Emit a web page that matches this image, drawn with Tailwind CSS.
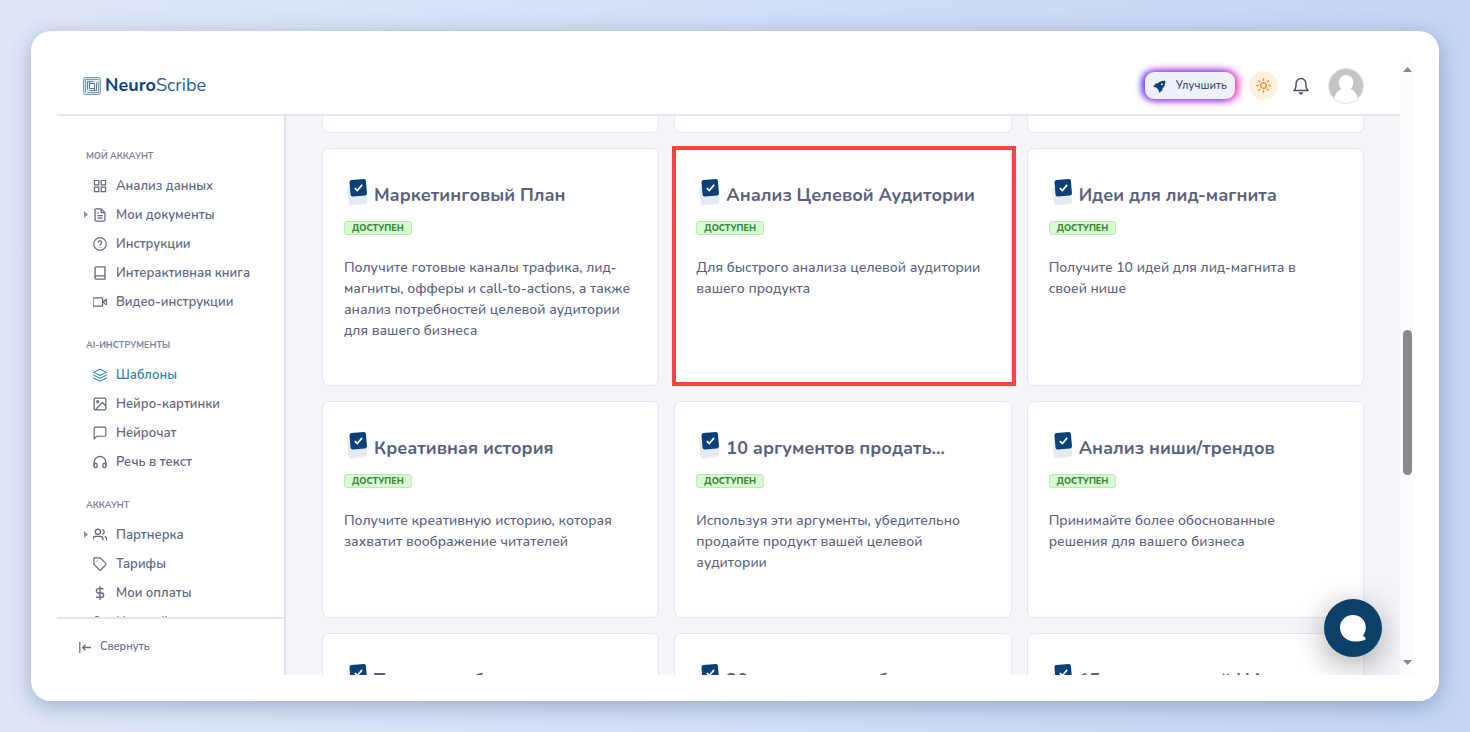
<!DOCTYPE html>
<html lang="ru">
<head>
<meta charset="utf-8">
<meta name="viewport" content="width=device-width, initial-scale=1">
<title>NeuroScribe — Шаблоны</title>
<script src="https://cdn.jsdelivr.net/npm/@tailwindcss/browser@4"></script>
</head>
<body class="h-screen overflow-hidden bg-linear-to-r from-[#e0e7f8] to-[#c6d5f5] p-[31px] font-['Nunito','Open_Sans','Noto_Sans',sans-serif] text-[#5a617d]">

<svg class="hidden" aria-hidden="true">
  <symbol id="doc" viewBox="0 0 22 28">
    <rect x="2" y="8.500" width="18.500" height="18" rx="2.500" fill="#e4eaf2" transform="rotate(-6 11 17)"/>
    <rect x="4" y="1.500" width="16.500" height="16.500" rx="2.200" fill="#0c4079" transform="rotate(-5 12 10)"/>
    <path d="M8.800 10.200l2.600 2.300 4.700-5.600" fill="none" stroke="#fff" stroke-width="1.700"/>
  </symbol>
</svg>

<div class="flex h-full flex-col rounded-[20px] bg-white p-[26px] pr-[25px] shadow-[0_5px_22px_rgba(50,70,110,0.36)]">
  <div class="relative flex min-h-0 flex-1">
    <div class="flex min-w-0 flex-1 flex-col">

      <header class="flex h-[59px] shrink-0 items-center border-b-2 border-[#e2e5ee] pr-9 pl-[26px]">
        <a href="#" class="flex items-center gap-1 text-[18px] text-[#2b5d92]">
          <svg class="size-[18px]" viewBox="0 0 18 18" fill="none" stroke="#7d9db5" stroke-width="1">
            <rect x="0.600" y="0.600" width="16.800" height="16.800" rx="2" fill="#e3ecf2" stroke="#6c8fa9"/>
            <path d="M2.500 15.500V2.500h13M15.500 4.500v11h-11"/>
            <path d="M4.500 12.500V4.500h6M13.500 5.500v8h-7" stroke="#5d86a4"/>
            <rect x="6.500" y="6.500" width="5" height="5" fill="#fff" stroke="none"/>
            <path d="M6.500 4.500v7M11.500 6.500v7M6.500 11.500h5M6.500 6.500h5" stroke="#47749a"/>
          </svg>
          <span><b class="text-[#0f427c]">Neuro</b>Scribe</span>
        </a>
        <div class="ml-auto flex items-center">
          <button class="flex h-[27px] items-center gap-[10px] rounded-[9px] bg-[#eef1f7] px-2 pt-px text-[11px] font-semibold text-[#3b5378] shadow-[-3px_0_7px_#5a4dff,3px_0_8px_#ff4fb8,0_0_9px_#c04df0]">
            <svg class="size-[13px]" viewBox="0 0 24 24" fill="#0c4079"><path fill-rule="evenodd" d="M22.500 1.500C16 1 11.500 3 8.500 6.500H5L.5 12.500l5.500 1.500L10 18l1.500 5.500 6-4.500v-3.500c4-3 5.500-7.500 5-14zM16.500 9.500a1.800 1.800 0 1 1 0-3.600 1.800 1.800 0 0 1 0 3.600z"/></svg>
            Улучшить
          </button>
          <button aria-label="Светлая тема" class="ml-[14px] flex size-[29px] items-center justify-center rounded-full bg-[#fff1de]">
            <svg class="size-[15px]" viewBox="0 0 24 24" fill="none" stroke="#f0963c" stroke-width="2.400" stroke-linecap="round"><circle cx="12" cy="12" r="4.600"/><path d="M12 1.200v2.300M12 20.500v2.300M4.300 4.300l1.600 1.600M18.100 18.100l1.600 1.600M1.200 12h2.300M20.500 12h2.300M4.300 19.700l1.600-1.600M18.100 5.900l1.600-1.600"/></svg>
          </button>
          <button aria-label="Уведомления" class="ml-[14px] flex size-[18px] items-center justify-center">
            <svg class="size-[18px]" viewBox="0 0 24 24" fill="none" stroke="#4a4f69" stroke-width="2" stroke-linejoin="round"><path d="M18.500 8.500a6.500 6.500 0 0 0-13 0c0 5.500-1 8-3 9.500h19c-2-1.500-3-4-3-9.500z"/><path d="M9.500 21h5l-1.200 1.800h-2.600z" fill="#4a4f69" stroke-width="1"/></svg>
          </button>
          <button aria-label="Профиль" class="ml-[18px] size-[36px] overflow-hidden rounded-full border border-[#dfe1ee]">
            <svg class="size-full" viewBox="0 0 36 36"><path fill="#c4c4c4" d="M0 0h36v36H0z"/><ellipse cx="18" cy="14.500" rx="7.800" ry="8.200" fill="#fff"/><path d="M5 36c0-9 4.500-14 9-15h8c4.500 1 9 6 9 15z" fill="#fff"/></svg>
          </button>
        </div>
      </header>

      <div class="flex min-h-0 flex-1">
        <aside class="flex w-[229px] shrink-0 flex-col border-r-2 border-[#dfe1ea]">
          <nav class="min-h-0 flex-1 overflow-hidden pt-8 text-[13px] font-semibold text-[#616884] [&_a>svg]:mb-[3px]">
            <h2 class="mb-2 pl-[29px] text-[9px] leading-4 font-bold text-[#7d849b]">МОЙ АККАУНТ</h2>
            <a href="#" class="flex h-[29px] items-center gap-[9px] pt-px pl-9">
              <svg class="size-[14px]" viewBox="0 0 24 24" fill="none" stroke="currentColor" stroke-width="2"><path d="M2.500 2.500h7.500v7.500H2.500zM14 2.500h7.500v7.500H14zM14 14h7.500v7.500H14zM2.500 14h7.500v7.500H2.500z"/></svg>Анализ данных</a>
            <a href="#" class="flex h-[29px] items-center gap-[9px] pt-px pl-[27px]">
              <svg class="-mr-[4px] h-[7px] w-[4px]" viewBox="0 0 4 7" fill="#8b90ad"><path d="M0 0l4 3.500L0 7z"/></svg>
              <svg class="size-[14px]" viewBox="0 0 24 24" fill="none" stroke="currentColor" stroke-width="2.200" stroke-linejoin="round"><path d="M14 1.500H5.500a2 2 0 0 0-2 2v17a2 2 0 0 0 2 2h13a2 2 0 0 0 2-2V8z"/><path d="M14 1.500V8h6.500M16.500 13h-9M16.500 17.500h-9M10 8.500H7.500"/></svg>Мои документы</a>
            <a href="#" class="flex h-[29px] items-center gap-[9px] pt-px pl-9">
              <svg class="size-[14px]" viewBox="0 0 24 24" fill="none" stroke="currentColor" stroke-width="2" stroke-linecap="round"><circle cx="12" cy="12" r="10.800"/><path d="M9 9a3 3 0 0 1 5.900 1c0 2-2.900 2.500-2.900 4M12 17.500v.1"/></svg>Инструкции</a>
            <a href="#" class="flex h-[29px] items-center gap-[9px] pt-px pl-9">
              <svg class="size-[14px]" viewBox="0 0 24 24" fill="none" stroke="currentColor" stroke-width="2.200" stroke-linejoin="round"><path d="M3.500 19.500A2.500 2.500 0 0 1 6 17h14.500"/><path d="M6 1.500h14.500v21H6a2.500 2.500 0 0 1-2.500-2.500V4A2.500 2.500 0 0 1 6 1.500z"/></svg>Интерактивная книга</a>
            <a href="#" class="flex h-[29px] items-center gap-[9px] pt-px pl-9">
              <svg class="size-[14px]" viewBox="0 0 24 24" fill="none" stroke="currentColor" stroke-width="2.200" stroke-linejoin="round"><path d="M23 7.500l-6 4.500 6 4.500z"/><rect x="0" y="5" width="16.500" height="14" rx="1.500"/></svg>Видео-инструкции</a>

            <h2 class="mt-5 mb-2 pl-[29px] text-[9px] leading-4 font-bold text-[#7d849b]">AI-ИНСТРУМЕНТЫ</h2>
            <a href="#" class="flex h-[29px] items-center gap-[9px] pt-px pl-9 text-[#2d83ae]" aria-current="page">
              <svg class="size-[14px]" viewBox="0 0 24 24" fill="none" stroke="currentColor" stroke-width="1.800" stroke-linejoin="round" stroke-linecap="round"><path d="M12 2L1 7.500 12 13l11-5.500zM1 17l11 5.500L23 17M1 12.200l11 5.500 11-5.500"/></svg>Шаблоны</a>
            <a href="#" class="flex h-[29px] items-center gap-[9px] pt-px pl-9">
              <svg class="size-[14px]" viewBox="0 0 24 24" fill="none" stroke="currentColor" stroke-width="2.200" stroke-linejoin="round"><rect x="2" y="2" width="20" height="20" rx="2"/><circle cx="8" cy="8" r="1.700"/><path d="M22 15.500L16 9.500 4 22"/></svg>Нейро-картинки</a>
            <a href="#" class="flex h-[29px] items-center gap-[9px] pt-px pl-9">
              <svg class="size-[14px]" viewBox="0 0 24 24" fill="none" stroke="currentColor" stroke-width="2" stroke-linejoin="round"><path d="M22 15.500a2 2 0 0 1-2 2H6.500L2 22V4a2 2 0 0 1 2-2h16a2 2 0 0 1 2 2z"/></svg>Нейрочат</a>
            <a href="#" class="flex h-[29px] items-center gap-[9px] pt-px pl-9">
              <svg class="size-[14px]" viewBox="0 0 24 24" fill="none" stroke="currentColor" stroke-width="2.200" stroke-linejoin="round"><path d="M2 19v-6.500a10 10 0 0 1 20 0V19"/><path d="M22 19.500a2 2 0 0 1-2 2h-1a2 2 0 0 1-2-2v-3a2 2 0 0 1 2-2h3zM2 19.500a2 2 0 0 0 2 2h1a2 2 0 0 0 2-2v-3a2 2 0 0 0-2-2H2z"/></svg>Речь в текст</a>

            <h2 class="mt-5 mb-2 pl-[29px] text-[9px] leading-4 font-bold text-[#7d849b]">АККАУНТ</h2>
            <a href="#" class="flex h-[29px] items-center gap-[9px] pt-px pl-[27px]">
              <svg class="-mr-[4px] h-[7px] w-[4px]" viewBox="0 0 4 7" fill="#8b90ad"><path d="M0 0l4 3.500L0 7z"/></svg>
              <svg class="size-[14px]" viewBox="0 0 24 24" fill="none" stroke="currentColor" stroke-width="2.200"><path d="M17 21.500v-2.500a4.500 4.500 0 0 0-4.500-4.500h-8A4.500 4.500 0 0 0 0 19v2.500M23.500 21.500v-2.500a4.500 4.500 0 0 0-3.500-4.300M16 2.200a4.600 4.600 0 0 1 0 8.800"/><circle cx="8.500" cy="6.500" r="4.500"/></svg>Партнерка</a>
            <a href="#" class="flex h-[29px] items-center gap-[9px] pt-px pl-9">
              <svg class="size-[14px]" viewBox="0 0 24 24" fill="none" stroke="currentColor" stroke-width="2" stroke-linejoin="round"><path d="M21.500 14l-7.800 7.800a2 2 0 0 1-2.800 0L1.500 12.500v-11h11l9 9.500a2.200 2.200 0 0 1 0 3z"/><path d="M7 7h.1" stroke-linecap="round"/></svg>Тарифы</a>
            <a href="#" class="flex h-[29px] items-center gap-[9px] pt-px pl-9">
              <svg class="size-[14px]" viewBox="0 0 24 24" fill="none" stroke="currentColor" stroke-width="2.200"><path d="M12 0v24M18 4.500H9.500a3.700 3.700 0 0 0 0 7.500h5a3.700 3.700 0 0 1 0 7.500H5"/></svg>Мои оплаты</a>
            <a href="#" class="flex h-[29px] items-center gap-[9px] pt-px pl-9">
              <svg class="size-[14px]" viewBox="0 0 24 24" fill="none" stroke="currentColor" stroke-width="2.200"><circle cx="7" cy="8" r="5"/><path d="M1 23v-2a5 5 0 0 1 5-5h7a5 5 0 0 1 5 5v2"/></svg>Настройки</a>
          </nav>
          <div class="flex h-[58px] shrink-0 items-center border-t-2 border-[#e2e5ee] pl-[22px]">
            <button class="flex items-center gap-[9px] text-[11px] font-semibold text-[#6b7187]">
              <svg class="h-[11px] w-[12px]" viewBox="0 0 12 11" fill="none" stroke="currentColor" stroke-width="1.300"><path d="M.8 0v11M12 5.500H4M6.500 2.800L3.700 5.500l2.800 2.700"/></svg>
              Свернуть
            </button>
          </div>
        </aside>

        <main class="relative min-w-0 flex-1 overflow-hidden bg-[#f5f6fb] px-9">
          <div class="grid grid-cols-3 gap-[15px] text-[14px] leading-[21px] font-medium">
            <div class="h-[17px] rounded-b-[7px] border border-t-0 border-[#e7e9f3] bg-white"></div>
            <div class="h-[17px] rounded-b-[7px] border border-t-0 border-[#e7e9f3] bg-white"></div>
            <div class="h-[17px] rounded-b-[7px] border border-t-0 border-[#e7e9f3] bg-white"></div>

            <article class="rounded-[7px] border border-[#e4e7f1] bg-white px-[21px] pt-7 pb-11">
              <h3 class="flex h-9 items-center gap-[6px] pl-[2px] text-[18px] font-bold whitespace-nowrap"><svg class="mb-[6px] h-7 w-[22px] shrink-0"><use href="#doc"/></svg>Маркетинговый План</h3>
              <span class="mt-2 mb-[22px] block h-[14px] w-fit rounded-[3px] border border-[#b9ecb3] bg-[#d9fbd0] px-[7px] text-[9px] leading-3 font-extrabold text-[#3a8540]">ДОСТУПЕН</span>
              <p class="pr-1">Получите готовые каналы трафика, лид-<wbr>магниты, офферы и call-to-actions, а также анализ потребностей целевой аудитории для вашего бизнеса</p>
            </article>
            <article class="relative rounded-[7px] border border-[#e4e7f1] bg-white px-[21px] pt-7 pb-11">
              <div class="pointer-events-none absolute -top-[3px] -right-[5px] -bottom-px -left-[3px] border-4 border-[#ff4141]"></div>
              <h3 class="flex h-9 items-center gap-[6px] pl-[2px] text-[18px] font-bold whitespace-nowrap"><svg class="mb-[6px] h-7 w-[22px] shrink-0"><use href="#doc"/></svg>Анализ Целевой Аудитории</h3>
              <span class="mt-2 mb-[22px] block h-[14px] w-fit rounded-[3px] border border-[#b9ecb3] bg-[#d9fbd0] px-[7px] text-[9px] leading-3 font-extrabold text-[#3a8540]">ДОСТУПЕН</span>
              <p class="pr-1">Для быстрого анализа целевой аудитории вашего продукта</p>
            </article>
            <article class="rounded-[7px] border border-[#e4e7f1] bg-white px-[21px] pt-7 pb-11">
              <h3 class="flex h-9 items-center gap-[6px] pl-[2px] text-[18px] font-bold whitespace-nowrap"><svg class="mb-[6px] h-7 w-[22px] shrink-0"><use href="#doc"/></svg>Идеи для лид-магнита</h3>
              <span class="mt-2 mb-[22px] block h-[14px] w-fit rounded-[3px] border border-[#b9ecb3] bg-[#d9fbd0] px-[7px] text-[9px] leading-3 font-extrabold text-[#3a8540]">ДОСТУПЕН</span>
              <p class="pr-4">Получите 10 идей для лид-магнита в своей нише</p>
            </article>

            <article class="rounded-[7px] border border-[#e4e7f1] bg-white px-[21px] pt-7 pb-11">
              <h3 class="flex h-9 items-center gap-[6px] pl-[2px] text-[18px] font-bold whitespace-nowrap"><svg class="mb-[6px] h-7 w-[22px] shrink-0"><use href="#doc"/></svg>Креативная история</h3>
              <span class="mt-2 mb-[22px] block h-[14px] w-fit rounded-[3px] border border-[#b9ecb3] bg-[#d9fbd0] px-[7px] text-[9px] leading-3 font-extrabold text-[#3a8540]">ДОСТУПЕН</span>
              <p class="pr-1">Получите креативную историю, которая захватит воображение читателей</p>
            </article>
            <article class="rounded-[7px] border border-[#e4e7f1] bg-white px-[21px] pt-7 pb-11">
              <h3 class="flex h-9 items-center gap-[6px] pl-[2px] text-[18px] font-bold whitespace-nowrap"><svg class="mb-[6px] h-7 w-[22px] shrink-0"><use href="#doc"/></svg>10 аргументов продать...</h3>
              <span class="mt-2 mb-[22px] block h-[14px] w-fit rounded-[3px] border border-[#b9ecb3] bg-[#d9fbd0] px-[7px] text-[9px] leading-3 font-extrabold text-[#3a8540]">ДОСТУПЕН</span>
              <p class="pr-1">Используя эти аргументы, убедительно продайте продукт вашей целевой аудитории</p>
            </article>
            <article class="rounded-[7px] border border-[#e4e7f1] bg-white px-[21px] pt-7 pb-11">
              <h3 class="flex h-9 items-center gap-[6px] pl-[2px] text-[18px] font-bold whitespace-nowrap"><svg class="mb-[6px] h-7 w-[22px] shrink-0"><use href="#doc"/></svg>Анализ ниши/трендов</h3>
              <span class="mt-2 mb-[22px] block h-[14px] w-fit rounded-[3px] border border-[#b9ecb3] bg-[#d9fbd0] px-[7px] text-[9px] leading-3 font-extrabold text-[#3a8540]">ДОСТУПЕН</span>
              <p class="pr-4">Принимайте более обоснованные решения для вашего бизнеса</p>
            </article>

            <article class="rounded-[7px] border border-[#e4e7f1] bg-white px-[21px] pt-7 pb-11">
              <h3 class="flex h-9 items-center gap-[6px] pl-[2px] text-[18px] font-bold whitespace-nowrap"><svg class="mb-[6px] h-7 w-[22px] shrink-0"><use href="#doc"/></svg>Текст для объявления</h3>
            </article>
            <article class="rounded-[7px] border border-[#e4e7f1] bg-white px-[21px] pt-7 pb-11">
              <h3 class="flex h-9 items-center gap-[6px] pl-[2px] text-[18px] font-bold whitespace-nowrap"><svg class="mb-[6px] h-7 w-[22px] shrink-0"><use href="#doc"/></svg>20 вопросов для блога</h3>
            </article>
            <article class="rounded-[7px] border border-[#e4e7f1] bg-white px-[21px] pt-7 pb-11">
              <h3 class="flex h-9 items-center gap-[6px] pl-[2px] text-[18px] font-bold whitespace-nowrap"><svg class="mb-[6px] h-7 w-[22px] shrink-0"><use href="#doc"/></svg>15 предпочтений ЦА</h3>
            </article>
          </div>

          <button aria-label="Открыть чат" class="absolute right-[18px] bottom-[18px] flex size-[58px] items-center justify-center rounded-full bg-[#0b4068] shadow-[0_8px_32px_rgba(0,0,0,0.35)]">
            <svg class="size-[28px]" viewBox="0 0 28 28" fill="#fff"><path d="M14 1C6.500 1 1 6.500 1 13.500 1 21 7 27.500 16 27.500c4 0 7.500-.6 10.500-2l-.3-2.500c-1 0-1.800-.7-2-1.800 1.600-2.200 2.600-4.700 2.600-7.700C26.800 6.500 21.500 1 14 1z"/></svg>
          </button>
        </main>
      </div>
    </div>

    <div class="flex w-[14px] shrink-0 flex-col items-center bg-[#fcfcfc] py-[10px]" aria-hidden="true">
      <svg class="h-[5px] w-[9px]" viewBox="0 0 9 5" fill="#8a8a8a"><path d="M4.500 0L9 5H0z"/></svg>
      <div class="grow-[14]"></div>
      <div class="h-[145px] w-[9px] rounded-full bg-[#8b8b8b]"></div>
      <div class="grow-[10]"></div>
      <svg class="h-[5px] w-[9px]" viewBox="0 0 9 5" fill="#8a8a8a"><path d="M0 0h9L4.500 5z"/></svg>
    </div>
  </div>
</div>
</body>
</html>
